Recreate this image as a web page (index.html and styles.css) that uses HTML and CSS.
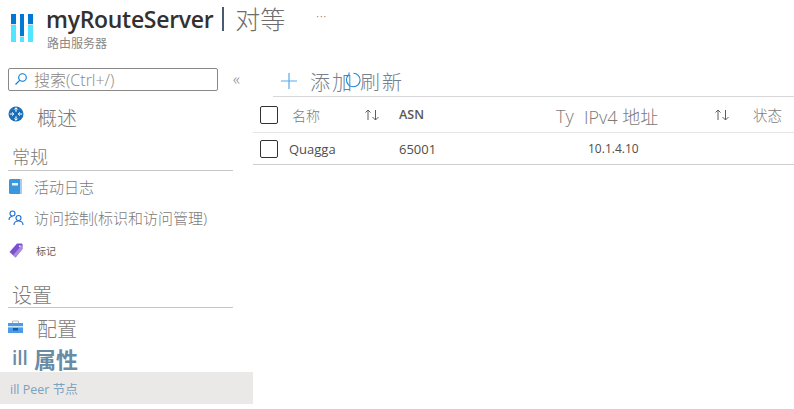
FILE: index.html

```html
<!DOCTYPE html>
<html lang="zh">
<head>
  <meta charset="UTF-8">
  <title>myRouteServer | 对等</title>
  <link rel="stylesheet" href="styles.css">
</head>
<body>
  <header class="top">
    <svg class="logo" width="22" height="28" viewBox="0 0 22 28">
      <rect x="0" y="0" width="5" height="28" fill="#50e6ff"/>
      <rect x="0" y="0" width="5" height="10" fill="#0078d4"/>
      <rect x="0" y="10" width="5" height="1" fill="#d8e4ea"/>
      <rect x="9" y="0" width="4" height="28" fill="#50e6ff"/>
      <rect x="9" y="0" width="4" height="22" fill="#0078d4"/>
      <rect x="9" y="22" width="4" height="1" fill="#d8e4ea"/>
      <rect x="17" y="0" width="5" height="28" fill="#50e6ff"/>
      <rect x="17" y="0" width="5" height="10" fill="#0078d4"/>
      <rect x="17" y="10" width="5" height="1" fill="#d8e4ea"/>
    </svg>
    <div class="titles">
      <div class="title-line">
        <h1>myRouteServer</h1>
        <span class="bar"></span>
        <span class="page">对等</span>
        <span class="more">···</span>
      </div>
      <div class="sub">路由服务器</div>
    </div>
  </header>

  <div class="body">
    <nav class="side">
      <div class="search-row">
        <div class="search">
          <svg width="14" height="14" viewBox="0 0 14 14" fill="none" stroke="#0078d4" stroke-width="1.100">
            <circle cx="8.500" cy="5.500" r="3.800"/>
            <path d="M5.700 8.300 1.500 12.500"/>
          </svg>
          <span>搜索(Ctrl+/)</span>
        </div>
        <span class="collapse">«</span>
      </div>

      <div class="item big first">
        <svg class="ico" width="16" height="16" viewBox="0 0 16 16">
          <circle cx="8" cy="8" r="7.500" fill="#1b6fb8"/>
          <path d="M8 1.800v4M8 10.200v4M1.800 8h4M10.200 8h4" stroke="#fff" stroke-width="1.100"/>
          <path d="M6.300 3.500 8 1.800 9.700 3.500M6.300 12.500 8 14.200 9.700 12.500M4 6.300 5.800 8 4 9.700M12 6.300 10.200 8 12 9.700" fill="none" stroke="#fff" stroke-width="1"/>
        </svg>
        <span>概述</span>
      </div>

      <h2 class="group">常规</h2>
      <div class="item log">
        <svg class="ico" width="13" height="15" viewBox="0 0 13 15">
          <rect x="0" y="0" width="13" height="15" rx="1.500" fill="#3a96dd"/>
          <rect x="11" y="0" width="2" height="15" fill="#a9cdeb"/>
          <rect x="3" y="4" width="6" height="2.500" fill="#e8f3fb"/>
        </svg>
        <span>活动日志</span>
      </div>
      <div class="item iam">
        <svg class="ico" width="16" height="16" viewBox="0 0 16 16" fill="none" stroke="#1f6fd0" stroke-width="1.100">
          <circle cx="4.500" cy="3.500" r="2.500"/>
          <path d="M1 10c0-2 1.500-3.500 3.500-3.500"/>
          <circle cx="10.500" cy="8" r="2.500"/>
          <path d="M6 15c0-2.500 2-4 4.500-4s4.500 1.500 4.500 4"/>
        </svg>
        <span>访问控制(标识和访问管理)</span>
      </div>
      <div class="item tag">
        <svg class="ico" width="14" height="15" viewBox="0 0 14 15">
          <path d="M8 0.500h4.500a1 1 0 0 1 1 1V6L6.500 14.500 0.500 9z" fill="#7a4fd0"/>
          <path d="M13.500 6 6.500 14.500 4 12.300 13 2z" fill="#a98ce0"/>
          <circle cx="10.800" cy="3.200" r="1" fill="#e6dcf7"/>
        </svg>
        <span>标记</span>
      </div>

      <h2 class="group second">设置</h2>
      <div class="item big conf">
        <svg class="ico" width="15" height="13" viewBox="0 0 15 13">
          <path d="M4.500 3V1h6v2" fill="none" stroke="#b8bcc0" stroke-width="1"/>
          <rect x="0" y="3" width="15" height="10" fill="#4c9be8"/>
          <rect x="0" y="6" width="15" height="1.500" fill="#cfe4f7"/>
          <rect x="5" y="8" width="5" height="2.500" fill="#0f5ea8"/>
        </svg>
        <span>配置</span>
      </div>
      <div class="item prop"><span class="ill">ill</span><span>属性</span></div>
      <div class="item peer"><span>ill Peer 节点</span></div>
    </nav>

    <main class="main">
      <div class="toolbar">
        <svg class="plus" width="16" height="16" viewBox="0 0 16 16">
          <path d="M8 0v16M0 8h16" stroke="#5aa9e6" stroke-width="1.200"/>
        </svg>
        <span class="tool-label">添加</span>
        <span class="refresh">
          <svg width="16" height="16" viewBox="0 0 16 16" fill="none" stroke="#1f86d8" stroke-width="1.100">
            <path d="M8.500 1.200A6.800 6.800 0 1 1 1.500 8 6.800 6.800 0 0 1 3.500 3"/>
            <path d="M4 0.500V3.500H1"/>
          </svg>
          <span class="tool-label">刷新</span>
        </span>
      </div>

      <div class="row head">
        <span class="check"></span>
        <span class="c-name">名称</span>
        <svg class="sort" width="16" height="12" viewBox="0 0 16 12" fill="none" stroke="#605e5c" stroke-width="1">
          <path d="M4 11V1M1.500 3.500 4 1l2.500 2.500"/>
          <path d="M11.500 1v10M8.500 8l3 3 3-3"/>
        </svg>
        <span class="c-asn asn">ASN</span>
        <span class="big-th c-ty">Ty</span>
        <span class="big-th c-ip">IPv4 地址</span>
        <svg class="sort" width="16" height="12" viewBox="0 0 16 12" fill="none" stroke="#605e5c" stroke-width="1">
          <path d="M4 11V1M1.500 3.500 4 1l2.500 2.500"/>
          <path d="M11.500 1v10M8.500 8l3 3 3-3"/>
        </svg>
        <span class="c-state">状态</span>
      </div>
      <div class="row data">
        <span class="check"></span>
        <span class="c-quagga">Quagga</span>
        <span class="c-asn">65001</span>
        <span class="c-addr">10.1.4.10</span>
      </div>
    </main>
  </div>
</body>
</html>
```

FILE: styles.css

```css
html, body { margin: 0; padding: 0; background: #fff; overflow: hidden; }
body { width: 794px; height: 409px; font-family: "Open Sans", "Noto Sans CJK SC", sans-serif; font-weight: 300; color: #7d7a78; }
h1, h2 { margin: 0; }

.top { display: flex; height: 67px; box-sizing: border-box; padding: 4px 0 0 11px; }
.logo { margin: 10px 13px 0 0; }
.title-line { display: flex; align-items: center; height: 30px; }
h1 { font-size: 23px; font-weight: 600; color: #323130; letter-spacing: -0.300px; line-height: 30px; }
.bar { width: 2px; height: 24px; background: #4a5a70; margin: 0 11px 0 9px; }
.page { font-size: 25px; color: #6f6d6b; line-height: 30px; }
.more { font-size: 10px; font-weight: 400; margin: 0 0 6px 31px; color: #8a8886; letter-spacing: 1px; }
.sub { font-size: 12px; line-height: 14px; margin: 3px 0 0 1px; color: #8a8886; font-weight: 400; }

.body { display: flex; }
.side { width: 253px; flex: none; }
.search-row { display: flex; align-items: center; padding-left: 8px; height: 24px; }
.search { display: flex; align-items: center; gap: 6px; width: 210px; height: 23px; box-sizing: border-box; border: 1px solid #8a8886; border-radius: 2px; padding-left: 5px; font-size: 16px; color: #8a8886; }
.collapse { margin-left: 15px; font-size: 16px; color: #7d7a78; }

.item { display: flex; align-items: center; font-size: 15px; }
.ico { flex: none; }
.big { font-size: 20px; }
.first { height: 30px; margin-top: 11px; padding-left: 8px; }
.first .ico { margin: 0 13px 7px 0; }
.group { margin: 13px 20px 0 8px; padding: 0 0 0 4px; height: 25px; line-height: 24px; font-size: 18px; font-weight: 300; border-bottom: 1px solid #c8c6c4; }
.log { height: 31px; padding-left: 9px; }
.log .ico { margin-right: 12px; }
.iam { height: 31px; padding-left: 8px; }
.iam .ico { margin-right: 10px; }
.tag { height: 34px; padding-left: 9px; font-size: 10px; color: #605e5c; font-weight: 400; }
.tag .ico { margin-right: 13px; }
.second { margin-top: 13px; height: 27px; line-height: 31px; font-size: 20px; }
.conf { height: 31px; margin-top: 5px; padding-left: 8px; }
.conf .ico { margin: 0 14px 5px 0; }
.prop { height: 28px; font-size: 22px; font-weight: 700; color: #6a8ba5; padding-left: 12px; gap: 6px; }
.ill { font-family: "Open Sans", sans-serif; font-weight: 600; font-size: 19px; letter-spacing: 0; }
.peer { height: 32px; background: #ebe9e7; padding-left: 10px; font-size: 12.500px; font-weight: 400; color: #7ba1bd; }

.main { flex: 1; margin-top: -1px; }
.toolbar { display: flex; align-items: center; height: 30px; margin-left: 20px; border-bottom: 1px solid #d8d8d8; padding-left: 8px; }
.plus { margin: 0 13px 0 0; flex: none; }
.tool-label { font-size: 20px; color: #76808c; letter-spacing: 2px; white-space: nowrap; }
.refresh { position: relative; display: flex; align-items: center; margin-left: 6px; }
.refresh svg { position: absolute; left: -15px; top: 5px; }

.row { display: grid; grid-template-columns: 36px 72px 38px 157px 28px 127px 42px 38px; align-items: center; font-size: 13px; }
.row span { white-space: nowrap; }
.head { height: 35px; border-bottom: 1px solid #e6e6e6; }
.data { height: 31px; border-bottom: 1px solid #cfcfcf; grid-template-columns: 36px 110px 189px 200px; color: #4f4d4b; font-weight: 400; font-size: 13px; }
.check { width: 16px; height: 16px; border: 1px solid #323130; border-radius: 2px; margin-left: 7px; }
.c-name { padding-left: 3px; font-size: 14px; }
.sort { margin-left: 3px; }
.asn { font-weight: 600; font-size: 12.500px; color: #5a5856; }
.big-th { font-size: 18px; }
.c-ty { padding-top: 3px; }
.c-ip { padding-top: 3px; }
.c-state { font-size: 14.500px; }
.c-addr { font-size: 12px; }
```
